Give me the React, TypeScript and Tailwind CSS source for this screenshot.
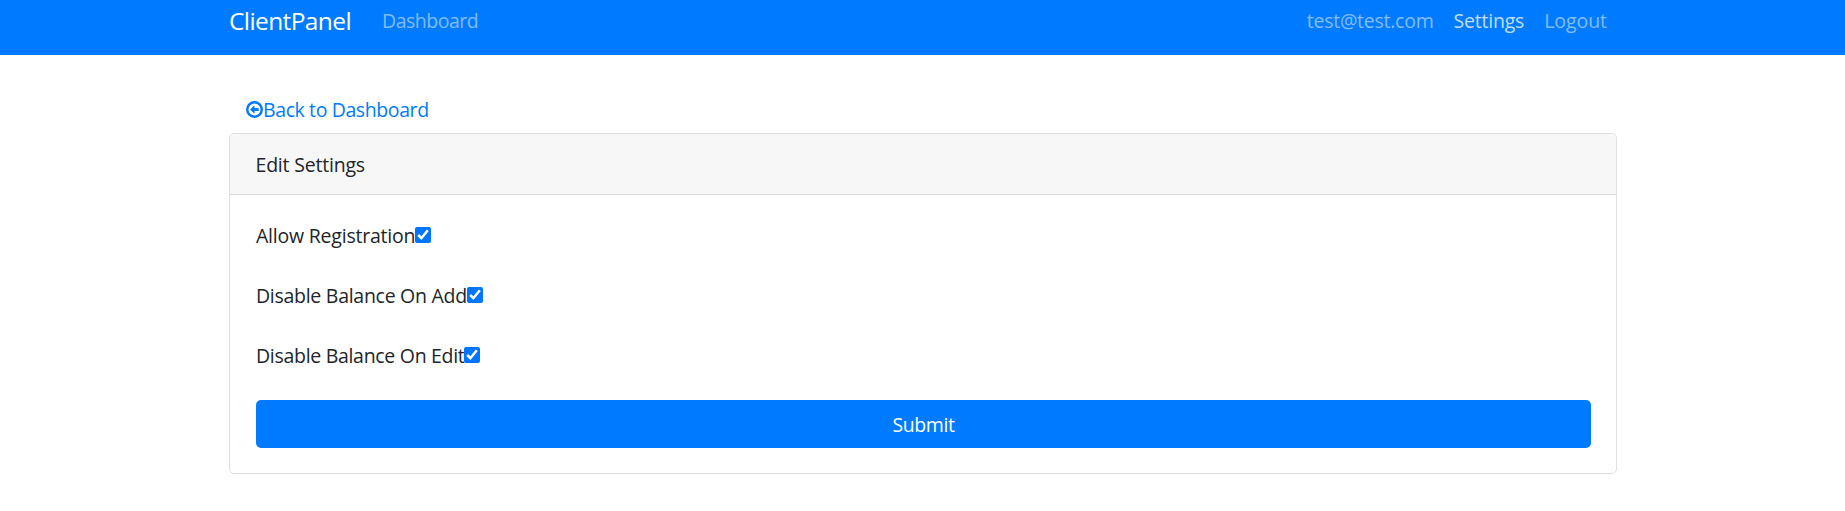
import { useState } from "react";

function BackIcon() {
  return (
    <svg viewBox="0 0 1536 1536" className="-mt-px h-[17px] w-[17px] shrink-0 fill-current" aria-hidden="true">
      <path d="M1152 672v192q0 13-9.500 22.500t-22.500 9.500h-352v192q0 14-9 23t-23 9q-12 0-24-10l-319-319q-9-9-9-23t9-23l320-320q9-9 23-9 13 0 22.500 9.500t9.500 22.500v192h352q13 0 22.500 9.500t9.500 22.500z" />
      <circle cx="768" cy="768" r="656" fill="none" stroke="currentColor" strokeWidth="224" />
    </svg>
  );
}

type Option = { id: string; label: string; tracking: string; width: string };

const options: Option[] = [
  { id: "registration", label: "Allow Registration", tracking: "tracking-[-0.22px]", width: "w-[159px]" },
  { id: "balanceAdd", label: "Disable Balance On Add", tracking: "tracking-[-0.28px]", width: "w-[211px]" },
  { id: "balanceEdit", label: "Disable Balance On Edit", tracking: "tracking-[-0.3px]", width: "w-[208px]" },
];

function Setting({ option }: { option: Option }) {
  const [checked, setChecked] = useState(true);
  return (
    <label htmlFor={option.id} className="flex h-[30px] items-center">
      <span className={`${option.width} ${option.tracking} shrink-0 whitespace-nowrap`}>{option.label}</span>
      <input
        id={option.id}
        type="checkbox"
        checked={checked}
        onChange={() => setChecked(!checked)}
        className="-mt-0.5 h-4 w-4 shrink-0 accent-[#0075ff]"
      />
    </label>
  );
}

export default function App() {
  return (
    <div className="min-h-screen bg-white font-['Open_Sans','Noto_Sans',sans-serif] text-[19.5px] leading-[30px] text-[#212529]">
      <nav className="h-[55px] bg-[#007bff]">
        <div className="mx-auto flex w-[1389px] pt-1 pr-[10px] pl-px text-white/50">
          <a href="#" className="-mt-px w-[153px] text-[24.5px] leading-[36px] tracking-[-0.6px] text-white">ClientPanel</a>
          <a href="#" className="pt-0.5 tracking-[-0.5px]">Dashboard</a>
          <div className="ml-auto flex gap-5 pt-0.5">
            <a href="#" className="tracking-[-0.26px]">test@test.com</a>
            <a href="#" className="tracking-[-0.2px] text-white/75">Settings</a>
            <a href="#" className="tracking-[-0.05px]">Logout</a>
          </div>
        </div>
      </nav>
      <main className="mx-auto w-[1389px] pt-10 pl-px">
        <a href="#" className="ml-[17px] flex h-[30px] items-center text-[#007bff]">
          <BackIcon />
          <span className="tracking-[-0.4px]">Back to Dashboard</span>
        </a>
        <section className="mt-2 h-[341px] rounded-[5px] border border-[#dfdfdf]">
          <h1 className="h-[61px] rounded-t-[4px] border-b border-[#d9d9d9] bg-[#f7f7f7] px-[25.500px] pt-4 tracking-[-0.2px]">
            Edit Settings
          </h1>
          <form className="pt-[26px] pr-[25px] pl-[26px]" onSubmit={(e) => e.preventDefault()}>
            <div className="flex flex-col gap-[30px]">
              {options.map((option) => (
                <Setting key={option.id} option={option} />
              ))}
            </div>
            <button className="mt-[29px] h-12 w-full rounded-[5px] bg-[#007bff] pt-0.5 tracking-[-0.4px] text-white">Submit</button>
          </form>
        </section>
      </main>
    </div>
  );
}
